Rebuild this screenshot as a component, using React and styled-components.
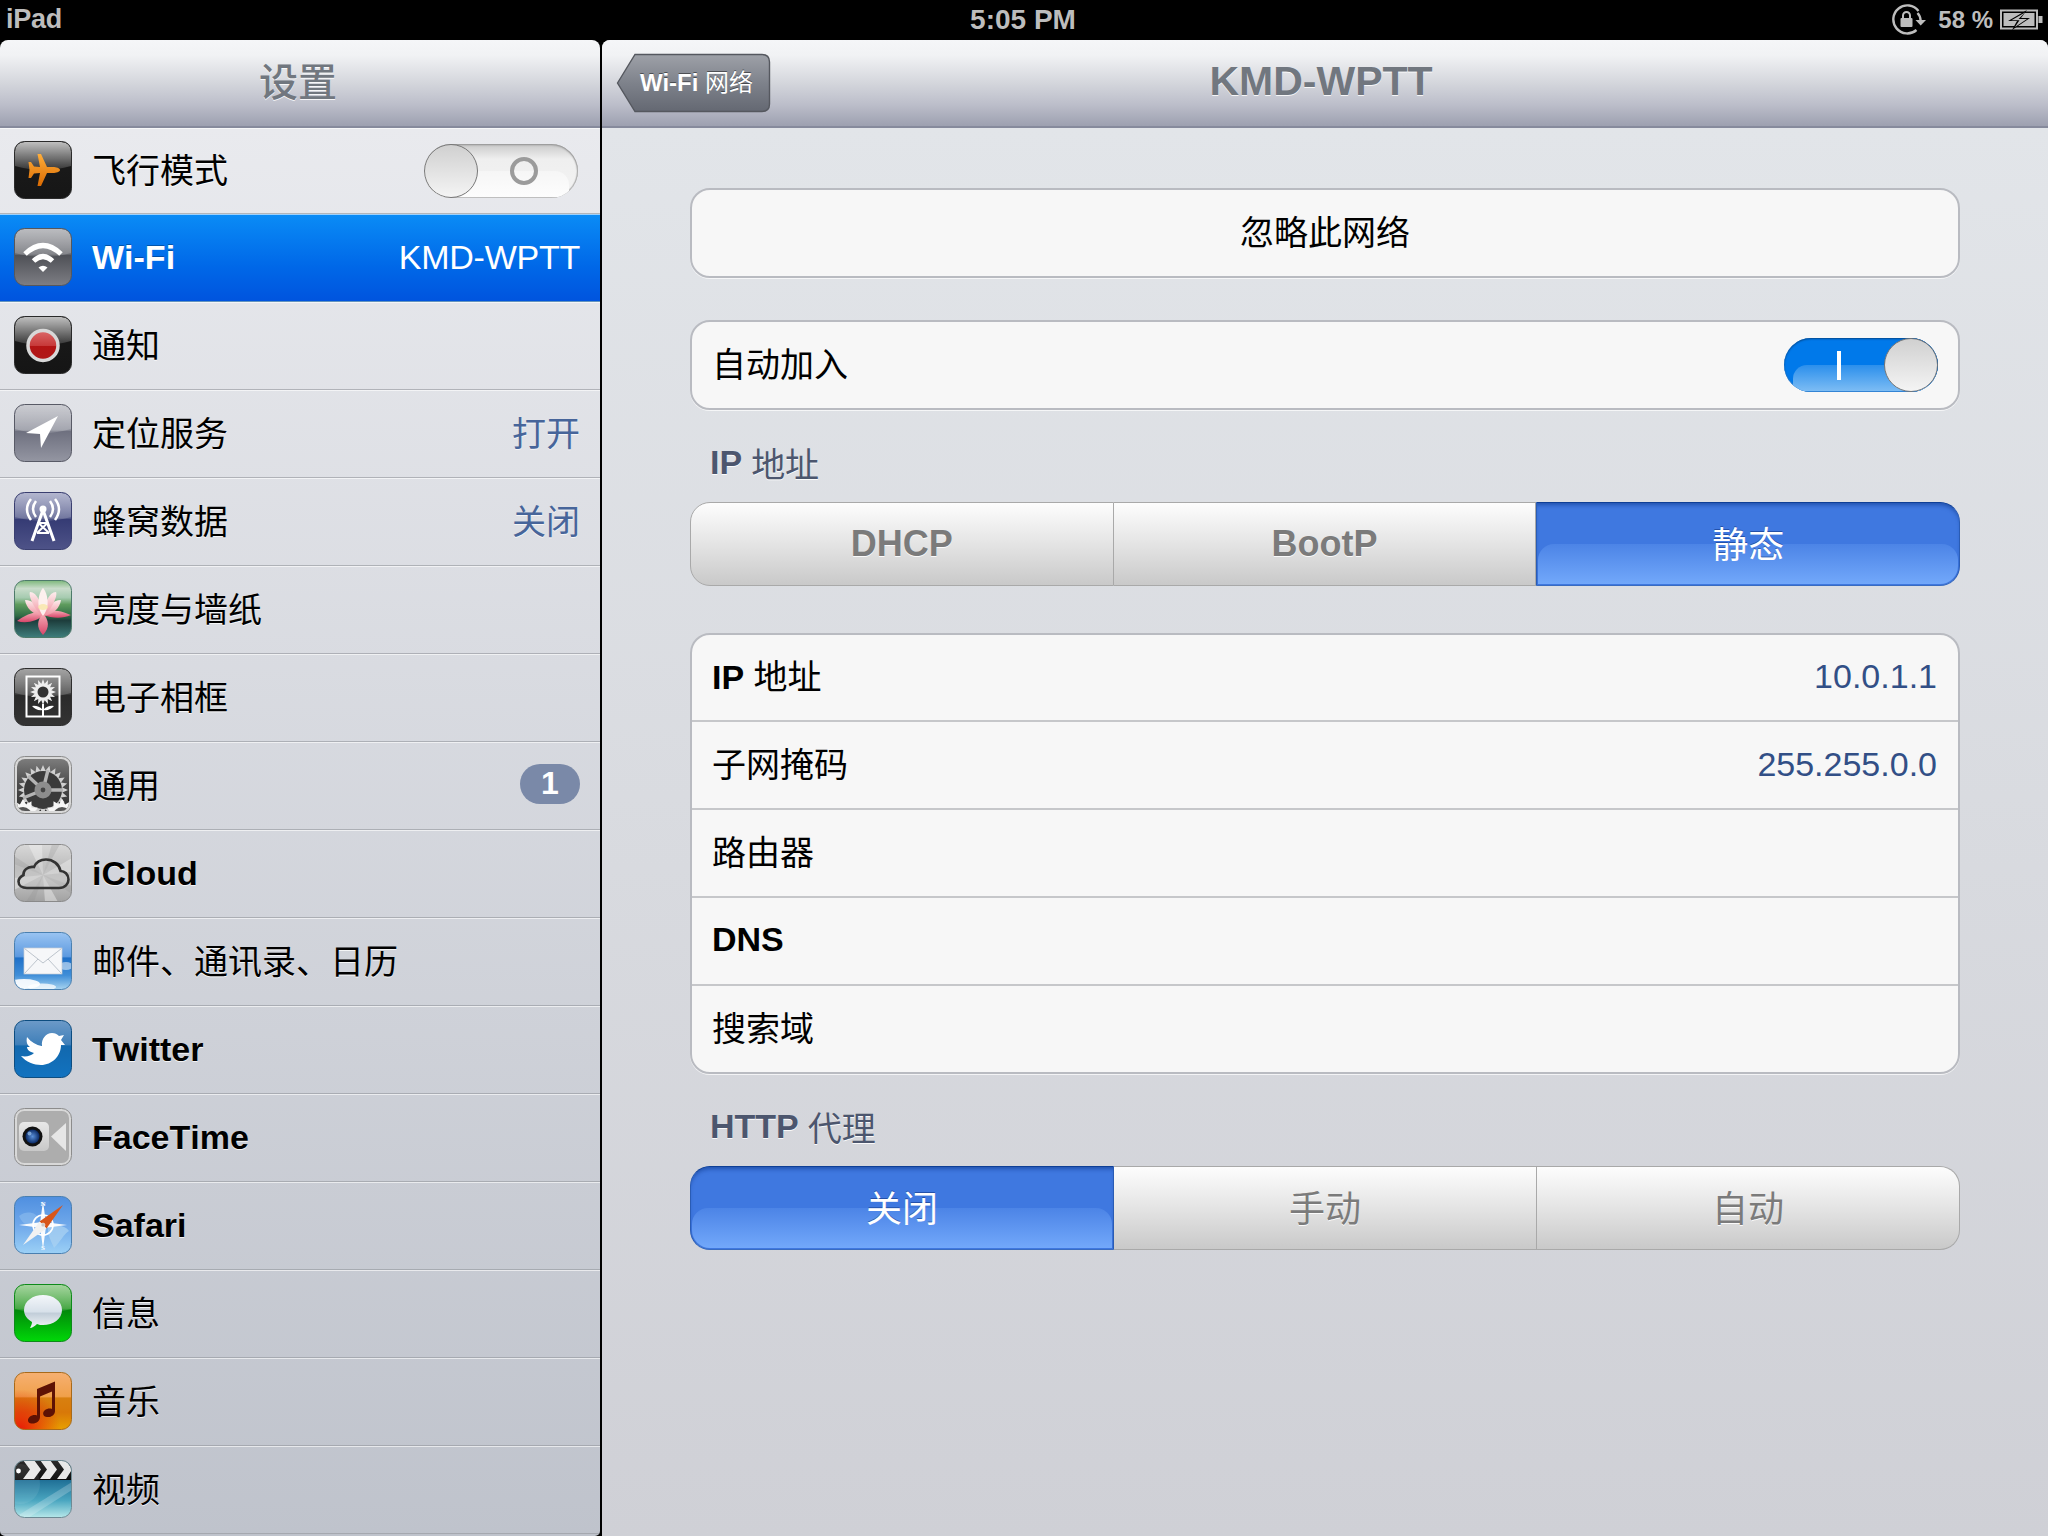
import React from "react";
import styled, { createGlobalStyle } from "styled-components";

const Global = createGlobalStyle`
  html, body { margin: 0; padding: 0; background: #000; }
  * { box-sizing: border-box; }
  body { font-family: "Liberation Sans", "Noto Sans CJK SC", sans-serif; }
`;

const Screen = styled.div`
  width: 2048px; height: 1536px; background: #000; overflow: hidden;
  display: flex; flex-direction: column;
`;
const StatusBar = styled.div`
  height: 40px; flex: none; display: grid; grid-template-columns: 1fr auto 1fr; align-items: center;
  padding: 0 5px 0 6px; color: #bdbdbd; font-size: 27px; font-weight: bold; letter-spacing: -0.3px;
`;
const StatusLeft = styled.div`font-weight: bold; margin-top: -1px;`;
const StatusTime = styled.div`font-size: 28px; letter-spacing: 0; margin: -1px 0 0 -3px;`;
const StatusRight = styled.div`
  display: flex; justify-content: flex-end; align-items: center; gap: 7px; font-weight: normal;
`;
const StatusPct = styled.span`font-size: 24px; font-weight: bold; margin-left: 4px; letter-spacing: 0;`;
const Main = styled.div`flex: 1; display: flex; gap: 2px; min-height: 0;`;
const Sidebar = styled.div`
  width: 600px; flex: none; display: flex; flex-direction: column; overflow: hidden;
  border-radius: 8px 8px 5px 5px;
`;
const NavBar = styled.div`
  height: 88px; flex: none; border-bottom: 2px solid #868a9c;
  background: linear-gradient(#f5f6f8 0%, #f1f2f4 18%, #d4d6dc 50%, #bcbeca 75%, #9da0b0 100%);
`;
const SideBar = styled(NavBar)`
  display: flex; align-items: center; justify-content: center; padding-right: 4px;
`;
const NavTitle = styled.div`
  color: #71777f; text-shadow: 0 1px 0 rgba(255,255,255,.85);
  font-size: ${p => p.$bold ? 41 : 39}px;
  margin-top: ${p => p.$bold ? -4 : -8}px;
  font-weight: ${p => p.$bold ? "bold" : 500};
`;
const RowList = styled.div`
  flex: 1; background: linear-gradient(#e9eaee, #bfc3cc);
`;
const Row = styled.div`
  height: 88px; display: flex; align-items: center; padding: 0 20px 0 14px;
  border-bottom: 1px solid rgba(150,153,160,.65);
  box-shadow: inset 0 1px 0 rgba(255,255,255,.6);
  background: ${p => p.$active ? "linear-gradient(#0a8cf6, #0068e8 60%, #0054de)" : "transparent"};
  &:first-child { height: 86px; }
`;
const IconBox = styled.div`width: 58px; height: 58px; flex: none; margin-bottom: 1px;`;
const RowLabel = styled.div`
  margin-left: 20px; flex: 1; font-size: 34px; font-kerning: none;
  margin-top: ${p => p.$bold ? 0 : -4}px;
  color: ${p => p.$active ? "#fff" : "#000"};
  font-weight: ${p => p.$bold ? "bold" : "normal"};
  text-shadow: ${p => p.$active ? "0 -1px 0 rgba(0,0,0,.3)" : "0 1px 0 rgba(255,255,255,.8)"};
`;
const RowValue = styled.div`
  font-size: 34px;
  margin-top: ${p => p.$active ? 0 : -4}px;
  letter-spacing: ${p => p.$active ? -0.25 : 0}px;
  color: ${p => p.$active ? "#fff" : "#47659a"};
  text-shadow: ${p => p.$active ? "none" : "0 1px 0 rgba(255,255,255,.7)"};
`;
const Badge = styled.div`
  width: 60px; height: 40px; border-radius: 20px; background: #7a89a8; color: #fff;
  font-size: 32px; font-weight: bold; display: flex; align-items: center; justify-content: center;
  margin-top: -4px;
`;
const Track = styled.div`
  position: relative; width: 154px; height: 54px; border-radius: 27px; overflow: hidden; flex: none;
  display: flex; flex-direction: ${p => p.$on ? "row" : "row-reverse"}; align-items: center;
  margin-right: ${p => p.$on ? 0 : 2}px;
  background: ${p => p.$on ? "#0079ea" : "linear-gradient(#c9c9c9, #efefef 28%, #f3f3f3)"};
  box-shadow: inset 0 1px 2px ${p => p.$on ? "#04478c" : "#8f8f8f"}, inset 0 -1px 1px ${p => p.$on ? "#3c8bd8" : "#bdbdbd"}, inset -1px 0 1px ${p => p.$on ? "#0a5ca8" : "#b5b5b5"};
  &::before {
    content: ""; position: absolute; left: 9px; right: 9px; top: 27px; bottom: 1px;
    border-radius: 14px 14px 0 0;
    background: ${p => p.$on ? "linear-gradient(#2b8fec, #7cbcf4)" : "linear-gradient(#f6f6f6, #fdfdfd)"};
  }
`;
const TrackMark = styled.div`
  position: relative; flex: 1; display: flex; align-items: center; justify-content: center;
  padding-left: ${p => p.$on ? 9 : 0}px;
  padding-right: ${p => p.$on ? 0 : 9}px;
`;
const OnBar = styled.div`width: 4px; height: 29px; background: #fff;`;
const OffRing = styled.div`
  width: 28px; height: 28px; border: 4px solid #9b9b9b; border-radius: 50%;
`;
const Knob = styled.div`
  position: relative; width: 54px; height: 54px; flex: none; border-radius: 50%;
  background: linear-gradient(#d0d0d0, #f4f4f4);
  border: 1.5px solid #777;
`;
const Detail = styled.div`
  flex: 1; display: flex; flex-direction: column; overflow: hidden; border-radius: 8px 8px 0 0;
  background: #d8dade;
`;
const DetailNav = styled(NavBar)`
  display: grid; grid-template-columns: 1fr auto 1fr; align-items: center; padding: 0 22px 0 14px;
`;
const BackButton = styled.div`
  position: relative; width: 155px; height: 60px; display: flex; align-items: center;
  padding-left: 24px; color: #fff; font-size: 24px; margin-top: -1px;
  text-shadow: 0 -1px 0 rgba(0,0,0,.45);
`;
const BackShape = styled.svg`position: absolute; left: 0; top: 0;`;
const BackText = styled.span`position: relative; margin-top: -4px;`;
const Latin = styled.b`font-weight: bold;`;
const DetailBody = styled.div`
  flex: 1; padding: 60px 88px 0; background: linear-gradient(#e2e5e9, #cfd0d6);
`;
const Card = styled.div`
  background: #f7f7f7; border: 2px solid #b9bbc1; border-radius: 20px; overflow: hidden;
  box-shadow: 0 1px 0 rgba(255,255,255,.7);
  margin-top: ${p => p.$top || 0}px;
`;
const CardRow = styled.div`
  height: ${p => p.$h || 88}px; display: flex; align-items: center; padding: 0 20px 0 20px; font-size: 34px; color: #000;
  justify-content: ${p => p.$center ? "center" : "space-between"};
  & + & { border-top: 2px solid #c6c7ca; }
`;
const RowText = styled.span`margin-top: ${p => p.$latin ? -3 : -6}px;`;
const TableValue = styled.span`color: #324f86; margin: -2px 1px 0 0;`;
const SectionHead = styled.div`
  height: 46px; margin: 30px 0 16px; padding: 0 0 2px 20px; display: flex; align-items: center;
  font-size: 34px; color: #4c566e; text-shadow: 0 1px 0 rgba(255,255,255,.9); gap: 9px;
`;
const Segments = styled.div`
  display: flex; height: 84px; width: 100%;
`;
const Segment = styled.div`
  position: relative; flex: 1; display: flex; align-items: center; justify-content: center;
  font-size: 36px;
  color: ${p => p.$selected ? "#fff" : "#7b7b7b"};
  font-weight: ${p => p.$bold ? "bold" : "normal"};
  text-shadow: ${p => p.$selected ? "0 -1px 0 rgba(0,30,100,.45)" : "0 1px 0 rgba(255,255,255,.9)"};
  background: ${p => p.$selected ? "#3f78e0" : "linear-gradient(#fdfdfd, #e4e4e4 50%, #c9c9c9)"};
  border-top: 1px solid ${p => p.$selected ? "#0e3f96" : "#a9a9a9"};
  border-bottom: 1px solid ${p => p.$selected ? "#3a6cc0" : "#a9a9a9"};
  border-left: ${p => p.$first ? "1px solid #a9a9a9" : "none"};
  border-right: 1px solid #a9a9a9;
  border-radius: ${p => p.$first ? "20px 0 0 20px" : p.$last ? "0 20px 20px 0" : "0"};
  ${p => p.$selected && `
    border-left: 1px solid #2a5cb4; border-right: 1px solid #2a5cb4;
    box-shadow: inset 0 4px 4px -2px rgba(10,50,130,.55);
    &::before {
      content: ""; position: absolute; left: 1px; right: 1px; top: 41px; bottom: 1px;
      border-radius: ${p.$first ? "16px 16px 0 18px" : "16px 16px 18px 0"};
      background: linear-gradient(#4c84e6, #72a8fa);
    }
  `}
  & > span { position: relative; margin-top: ${p => p.$bold ? 0 : -5}px; }
`;

/* ---------- icons ---------- */
const GEAR = (cx, cy, R, r, n) => {
  const pts = [];
  for (let i = 0; i < n * 2; i++) {
    const a = (Math.PI * i) / n;
    const q = i % 2 ? r : R;
    pts.push(`${(cx + q * Math.sin(a)).toFixed(2)},${(cy - q * Math.cos(a)).toFixed(2)}`);
  }
  return pts.join(" ");
};
const RECT = { x: 0.5, y: 0.5, width: 57, height: 57, rx: 10 };
const Grad = ({ id, stops, x2 = 0, y2 = 1, x1 = 0, y1 = 0 }) => (
  <linearGradient id={id} x1={x1} y1={y1} x2={x2} y2={y2}>
    {stops.map(([o, c, a], i) => <stop key={i} offset={o} stopColor={c} stopOpacity={a === undefined ? 1 : a} />)}
  </linearGradient>
);
const GlossPath = ({ id, o = 0.55, lo = 0.12 }) => (
  <>
    <defs><Grad id={id} stops={[[0, "#fff", o], [1, "#fff", lo]]} /></defs>
    <path d="M1 11 Q1 1 11 1 H47 Q57 1 57 11 V25 Q29 33 1 25Z" fill={`url(#${id})`} />
  </>
);
const Base = ({ id, stops, stroke = "#333", children }) => {
  const clip = `${id}c`;
  return (
    <svg width="58" height="58" viewBox="0 0 58 58">
      <defs>
        <Grad id={id} stops={stops} />
        <clipPath id={clip}><rect {...RECT} /></clipPath>
      </defs>
      <rect {...RECT} fill={`url(#${id})`} />
      <g clipPath={`url(#${clip})`}>{children}</g>
      <rect {...RECT} fill="none" stroke={stroke} strokeWidth="1" />
    </svg>
  );
};

const Airplane = () => (
  <Base id="ia" stops={[[0, "#1c1c1c"], [1, "#161616"]]} stroke="#2b2b2b">
    <defs><Grad id="iap" stops={[[0, "#ffae3a"], [1, "#d96a02"]]} /></defs>
    <GlossPath id="iag" o={0.72} lo={0.12} />
    <path fill="url(#iap)" d="M46 29 C46 31 42 32 39 32 H33 L27 45 H23.5 L26 32 L20 32.5 L17 37 H14.5 L15.5 29 L14.5 21 H17 L20 25.5 L26 26 L23.5 13 H27 L33 26 H39 C42 26 46 27 46 29Z" />
  </Base>
);
const Wifi = () => (
  <Base id="iw" stops={[[0, "#8a8c92"], [0.45, "#6c6e74"], [0.47, "#4f5157"], [1, "#7d7e84"]]} stroke="#55575c">
    <GlossPath id="iwg" o={0.42} lo={0.14} />
    <path d="M11 26 Q29 9 47 26" fill="none" stroke="#fff" strokeWidth="5" />
    <path d="M19.5 33 Q29 24 38.5 33" fill="none" stroke="#fff" strokeWidth="5" />
    <path d="M24.5 39.5 Q29 36 33.5 39.5 L29 44Z" fill="#fff" />
  </Base>
);
const Notify = () => (
  <Base id="in" stops={[[0, "#1b1b1b"], [1, "#151515"]]} stroke="#2a2a2a">
    <defs><Grad id="inr" stops={[[0, "#dc6a6a"], [0.5, "#c73a3a"], [0.52, "#b31414"], [1, "#b01818"]]} /></defs>
    <GlossPath id="ing" o={0.72} lo={0.12} />
    <circle cx="29" cy="29.5" r="15" fill="url(#inr)" stroke="#d8d8d8" strokeWidth="3.5" />
  </Base>
);
const Location = () => (
  <Base id="il" stops={[[0, "#a0a2ac"], [0.45, "#8c8e9a"], [0.47, "#6e707f"], [1, "#9496a2"]]} stroke="#585a66">
    <GlossPath id="ilg" o={0.45} lo={0.18} />
    <path d="M44 12 L12 29 L26 30 L27 44Z" fill="#fff" />
  </Base>
);
const Cellular = () => (
  <Base id="ic" stops={[[0, "#7c82ac"], [0.45, "#5a608f"], [0.47, "#353b74"], [1, "#4e5388"]]} stroke="#3a3f70">
    <GlossPath id="icg" o={0.42} lo={0.12} />
    <g fill="none" stroke="#fff" strokeWidth="2.5">
      <path d="M29 18 L18 49 M29 18 L40 49" strokeWidth="3" />
      <path d="M24.5 31 L35 41 M33.5 31 L23 41 M23 41 H35 M25 31 H33" strokeWidth="2" />
      <path d="M22 9 Q16 17 22 25 M36 9 Q42 17 36 25" />
      <path d="M17 7 Q9 17 17 28 M41 7 Q49 17 41 28" />
    </g>
    <circle cx="29" cy="17" r="3.5" fill="#fff" />
  </Base>
);
const Lotus = () => (
  <Base id="ib" stops={[[0, "#7eb87c"], [0.14, "#c9dccb"], [0.3, "#a6cbb0"], [0.42, "#5f9c5e"], [0.62, "#2f6b45"], [0.7, "#1d3d3c"], [1, "#3e7e7c"]]} stroke="#4d7a6a">
    <defs>
      <Grad id="ibp" stops={[[0, "#fdeeee"], [1, "#f0909f"]]} />
      <Grad id="ibq" stops={[[0, "#f6b0b8"], [1, "#d8456a"]]} />
    </defs>
    <path d="M29 31 C45 29 52 33 57 35 C48 39 38 38 29 35Z" fill="url(#ibq)" />
    <path d="M29 32 C20 31 10 36 3 41 C12 44 24 41 29 35Z" fill="url(#ibq)" />
    <path d="M29 33 C35 40 36 48 29 55 C22 48 23 40 29 33Z" fill="url(#ibq)" />
    <path d="M29 36 C18 35 12 27 11 20 C19 20 27 27 29 36Z" fill="url(#ibp)" />
    <path d="M29 36 C40 35 46 27 47 20 C39 20 31 27 29 36Z" fill="url(#ibp)" />
    <path d="M29 36 C20 30 14 15 16 12 C23 12 28 24 29 36Z" fill="url(#ibp)" />
    <path d="M29 36 C38 30 44 15 42 12 C35 12 30 24 29 36Z" fill="url(#ibp)" />
    <path d="M29 36 C21 26 25 12 29 8 C33 12 37 26 29 36Z" fill="#fdf0ee" />
    <ellipse cx="29" cy="27" rx="5" ry="3" fill="#f7e6a8" opacity=".8" />
  </Base>
);
const PhotoFrame = () => (
  <Base id="ip" stops={[[0, "#5a5a5a"], [0.45, "#3c3c3c"], [0.47, "#2a2a2a"], [1, "#333"]]} stroke="#2e2e2e">
    <GlossPath id="ipg" o={0.45} lo={0.15} />
    <rect x="12.5" y="8.5" width="33" height="40" fill="none" stroke="#fff" strokeWidth="2" />
    <polygon points={GEAR(29, 24, 13, 8.5, 16)} fill="#eee" />
    <circle cx="29" cy="24" r="5.5" fill="#333" />
    <path d="M29 36 V48" stroke="#fff" strokeWidth="2" />
    <path d="M29 42 Q24 37 18 38 Q22 43 29 42Z M29 42 Q34 37 40 38 Q36 43 29 42Z" fill="#fff" />
  </Base>
);
const General = () => (
  <svg width="58" height="58" viewBox="0 0 58 58">
    <defs>
      <Grad id="ig" stops={[[0, "#7c7c7c"], [0.5, "#4a4a4a"], [1, "#2e2e2e"]]} />
      <clipPath id="igc"><rect x="3" y="3" width="52" height="52" rx="8" /></clipPath>
    </defs>
    <rect {...RECT} fill="#d8d8d8" stroke="#8a8a8a" />
    <rect x="3" y="3" width="52" height="52" rx="8" fill="url(#ig)" />
    <g clipPath="url(#igc)">
      <polygon points={GEAR(29, 34, 25, 19.5, 24)} fill="#d0d0d0" />
      <circle cx="29" cy="34" r="19" fill="#3a3a3a" />
      <path d="M29 34 L34 14 M29 34 L49 34 M29 34 L9 42 M29 34 L14 20" stroke="#b4b4b4" strokeWidth="3.4" />
      <circle cx="29" cy="34" r="8.5" fill="#8d8d8d" />
      <circle cx="29" cy="34" r="2.4" fill="#444" />
      <polygon points={GEAR(9, 60, 17, 12, 12)} fill="#f6f6f6" />
      <polygon points={GEAR(48, 60, 17, 12, 12)} fill="#f6f6f6" />
      <circle cx="9" cy="60" r="9" fill="#555" />
      <circle cx="48" cy="60" r="9" fill="#555" />
    </g>
  </svg>
);
const ICloud = () => (
  <Base id="ii" stops={[[0, "#d8d8d8"], [0.4, "#bdbdbd"], [0.6, "#c4c4c4"], [1, "#a2a2a2"]]} stroke="#8a8a8a">
    <path d="M29 31 L14 0 H28Z M29 31 L44 58 H31Z M29 31 L58 14 V28Z M29 31 L0 46 V34Z" fill="#f2f2f2" opacity=".45" />
    <path d="M29 31 L38 0 H46Z M29 31 L20 58 H12Z M29 31 L58 42 V50Z M29 31 L0 20 V12Z" fill="#8f8f8f" opacity=".25" />
    <path d="M13 44 H45 C51 44 54.5 40 54.5 35.5 C54.5 30 50.5 27 46.5 27 C45 20 39 15.5 32 15.5 C26.5 15.5 22 18.5 20 23 C13 22 9 27 9.5 31 C6 33 4.5 35 4.5 37.5 C4.5 41.5 8 44 13 44Z" fill="#c8c8c8" fillOpacity=".35" stroke="#333" strokeWidth="2.6" />
  </Base>
);
const Mail = () => (
  <Base id="im" stops={[[0, "#9ac4f2"], [0.42, "#5d9ae0"], [0.45, "#1f70c8"], [0.75, "#3f8ed8"], [1, "#a8d4f0"]]} stroke="#4a80b0">
    <ellipse cx="10" cy="52" rx="16" ry="5" fill="#fff" opacity=".9" />
    <ellipse cx="28" cy="55" rx="14" ry="3.5" fill="#fff" opacity=".75" />
    <ellipse cx="52" cy="34" rx="7" ry="4" fill="#fff" opacity=".5" />
    <rect x="10" y="16" width="38" height="26" fill="#f6f7f9" stroke="#c6ccd4" strokeWidth=".7" />
    <path d="M10.5 16.5 L29 31 L47.5 16.5 M10.5 41.5 L24 27 M47.5 41.5 L34 27" fill="none" stroke="#b6bdc6" strokeWidth=".9" />
  </Base>
);
const Twitter = () => (
  <Base id="it" stops={[[0, "#6c9ac8"], [0.42, "#3f7fb9"], [0.45, "#1268ae"], [1, "#1273c0"]]} stroke="#0d4d80">
    <path fill="#fff" d="M13 17 C17 22 22 25 28 26 C27 19 32 13 38 13 C41 13 43 14 45 16 L50 15 L47 20 L51 25 L47 25 C47 36 38 45 27 45 C20 45 12 42 7 36 C12 37 17 36 20 33 C16 32 13 30 13 27 L16 27 C13 25 12 22 13 17Z" />
  </Base>
);
const FaceTime = () => (
  <svg width="58" height="58" viewBox="0 0 58 58">
    <defs>
      <radialGradient id="ifl"><stop offset="0" stopColor="#5a90d8" /><stop offset="1" stopColor="#0a2a66" /></radialGradient>
      <Grad id="ifb" stops={[[0, "#e8e8e8"], [1, "#c8c8c8"]]} />
    </defs>
    <rect {...RECT} fill="#d8d8d8" stroke="#8c8c8c" />
    <rect x="3" y="3" width="52" height="52" rx="7" fill="#adadad" />
    <rect x="5" y="14" width="30" height="29" rx="5" fill="url(#ifb)" />
    <circle cx="18.5" cy="28.5" r="10" fill="#111" />
    <circle cx="18.5" cy="28.5" r="7" fill="url(#ifl)" />
    <circle cx="15.5" cy="25.5" r="2" fill="#9cc4f0" opacity=".7" />
    <path d="M37 28.5 L52 15 V43Z" fill="#e6e6e6" />
  </svg>
);
const Safari = () => (
  <Base id="is" stops={[[0, "#4f8fe0"], [0.5, "#6fa8ea"], [1, "#9bd0f6"]]} stroke="#4a7fb0">
    <path d="M34 30 C42 28 52 30 55 35 C50 38 46 46 40 52 C38 46 33 40 34 30Z" fill="#a9d2f2" opacity=".75" />
    <path d="M5 20 C12 14 22 16 24 22 C18 30 10 32 5 20Z" fill="#8cbcee" opacity=".6" />
    <polygon points={GEAR(29, 29, 24, 4, 4)} fill="#fff" opacity=".95" />
    <circle cx="29" cy="29" r="10" fill="none" stroke="#fff" strokeWidth="1.6" />
    <path d="M49 9 L32.5 32.5 L25.5 25.5Z" fill="#d8561a" />
    <path d="M9 49 L32.5 32.5 L25.5 25.5Z" fill="#f2f2f2" />
    <circle cx="29" cy="29" r="2" fill="#c8c8c8" stroke="#fff" strokeWidth=".5" />
    <text x="29" y="10" fontSize="7" fontWeight="bold" fill="#fff" textAnchor="middle" fontFamily="'Liberation Serif', serif">N</text>
    <text x="29" y="54" fontSize="7" fontWeight="bold" fill="#fff" textAnchor="middle" fontFamily="'Liberation Serif', serif">S</text>
  </Base>
);
const Messages = () => (
  <Base id="ime" stops={[[0, "#6dba62"], [0.42, "#2a9a28"], [0.45, "#02880a"], [1, "#00d808"]]} stroke="#0e8a1a">
    <GlossPath id="imeg" o={0.38} lo={0.1} />
    <defs><Grad id="imeb" stops={[[0, "#f4f7fa"], [0.5, "#d8e1ea"], [0.56, "#c2ced9"], [1, "#f2f5f7"]]} /></defs>
    <path fill="url(#imeb)" d="M29 11 C39 11 48 17 48 26 C48 35 39 41 29 41 C27 41 25 41 23 40 C21 42 18 44 16 44 C17 42 18 40 18 38 C13 35 10 31 10 26 C10 17 19 11 29 11Z" />
  </Base>
);
const Music = () => (
  <Base id="imu" stops={[[0, "#f6b072"], [0.42, "#f0a04a"], [0.45, "#d88010"], [0.7, "#d87808"], [1, "#e8a000"]]} stroke="#a86a1a">
    <defs><radialGradient id="imur" cx="0.1" cy="1" r="0.7"><stop offset="0" stopColor="#e81808" /><stop offset="1" stopColor="#e81808" stopOpacity="0" /></radialGradient></defs>
    <rect width="58" height="58" fill="url(#imur)" />
    <path fill="#5e1204" d="M23 17 L41 9.5 V39 C41 43 37 45.5 33 45 C29 44.5 28 41 30.5 38.5 C33 36.5 36 36 38 37 V19.5 L26 24.5 V45 C26 49 22 52 17.5 51.5 C13.5 51 13 47.5 15.5 45 C18 43 21 42.5 23 43.5Z" />
  </Base>
);
const Video = () => (
  <Base id="iv" stops={[[0, "#2a2a2a"], [0.33, "#111"], [0.34, "#1f6f96"], [0.7, "#4aa6c0"], [1, "#b6e8ea"]]} stroke="#6d8a94">
    <path d="M9 0 H20 L27 9.5 L20 19 H9 L16 9.5Z M26 0 H36 L43 9.5 L36 19 H26 L33 9.5Z M43 0 H52 L58 9.5 L52 19 H43 L50 9.5Z" fill="#e8e8e8" />
    <path d="M0 0 H8 L0 8Z" fill="#4a4a4a" />
    <rect x="0" y="19" width="58" height="1" fill="#0c0c0c" />
    <circle cx="4.5" cy="11" r="2.4" fill="#fff" />
    <path d="M0 58 L58 22 V30 L14 58Z" fill="#fff" opacity=".22" />
    <circle cx="6" cy="24" r="20" fill="#fff" opacity=".08" />
  </Base>
);

const RotationLock = () => (
  <svg width="36" height="32" viewBox="0 0 36 32">
    <path d="M25.5 26 A14 14 0 1 1 27.5 7" fill="none" stroke="#bdbdbd" strokeWidth="2.4" />
    <rect x="9.5" y="14" width="12" height="9" rx="1" fill="#bdbdbd" />
    <path d="M12 14 V11.5 A3.5 3.5 0 0 1 19 11.5 V14" fill="none" stroke="#bdbdbd" strokeWidth="2" />
    <path d="M24.5 16 H35 L29.7 21.5Z" fill="#bdbdbd" />
    <path d="M26.5 9 Q29.5 12 29.7 17" fill="none" stroke="#bdbdbd" strokeWidth="2.4" />
  </svg>
);
const Battery = () => (
  <svg width="43" height="22" viewBox="0 0 43 22">
    <rect x="1" y="1.5" width="36" height="18" fill="none" stroke="#bdbdbd" strokeWidth="2" />
    <rect x="3.5" y="4" width="31" height="13" fill="#bdbdbd" />
    <rect x="38.5" y="7" width="4" height="7" fill="#bdbdbd" />
    <path d="M27 1 L8 12 H17 L12 21 L30 9 H21Z" fill="#000" />
    <path d="M25 3.5 L11.5 11.3 H19.5 L15 18 L27 10 H18.5Z" fill="#bdbdbd" />
  </svg>
);
const BackArrow = () => (
  <BackShape width="155" height="60" viewBox="0 0 155 60">
    <defs><Grad id="bk" stops={[[0, "#9ea1a8"], [0.5, "#7e828b"], [1, "#646872"]]} /></defs>
    <path d="M1.5 30 L19 1.5 H146 Q153.5 1.5 153.5 9 V51 Q153.5 58.5 146 58.5 H19Z" fill="url(#bk)" stroke="#55585f" strokeWidth="1.4" />
  </BackShape>
);

const Switch = ({ on }) => (
  <Track $on={on}>
    <TrackMark $on={on}>{on ? <OnBar /> : <OffRing />}</TrackMark>
    <Knob />
  </Track>
);

const MENU = [
  { icon: Airplane, label: "飞行模式", toggle: true },
  { icon: Wifi, label: "Wi-Fi", bold: true, value: "KMD-WPTT", active: true },
  { icon: Notify, label: "通知" },
  { icon: Location, label: "定位服务", value: "打开" },
  { icon: Cellular, label: "蜂窝数据", value: "关闭" },
  { icon: Lotus, label: "亮度与墙纸" },
  { icon: PhotoFrame, label: "电子相框" },
  { icon: General, label: "通用", badge: "1" },
  { icon: ICloud, label: "iCloud", bold: true },
  { icon: Mail, label: "邮件、通讯录、日历" },
  { icon: Twitter, label: "Twitter", bold: true },
  { icon: FaceTime, label: "FaceTime", bold: true },
  { icon: Safari, label: "Safari", bold: true },
  { icon: Messages, label: "信息" },
  { icon: Music, label: "音乐" },
  { icon: Video, label: "视频" },
];

export default function App() {
  return (
    <Screen>
      <Global />
      <StatusBar>
        <StatusLeft>iPad</StatusLeft>
        <StatusTime>5:05 PM</StatusTime>
        <StatusRight>
          <RotationLock />
          <StatusPct>58 %</StatusPct>
          <Battery />
        </StatusRight>
      </StatusBar>
      <Main>
        <Sidebar>
          <SideBar><NavTitle>设置</NavTitle></SideBar>
          <RowList>
            {MENU.map(({ icon: Icon, label, bold, value, active, toggle, badge }) => (
              <Row key={label} $active={active}>
                <IconBox><Icon /></IconBox>
                <RowLabel $bold={bold} $active={active}>{label}</RowLabel>
                {value && <RowValue $active={active}>{value}</RowValue>}
                {toggle && <Switch on={false} />}
                {badge && <Badge>{badge}</Badge>}
              </Row>
            ))}
          </RowList>
        </Sidebar>
        <Detail>
          <DetailNav>
            <BackButton>
              <BackArrow />
              <BackText><Latin>Wi-Fi</Latin> 网络</BackText>
            </BackButton>
            <NavTitle $bold>KMD-WPTT</NavTitle>
            <div />
          </DetailNav>
          <DetailBody>
            <Card><CardRow $center $h={86}><RowText>忽略此网络</RowText></CardRow></Card>
            <Card $top={42}>
              <CardRow $h={86}>
                <RowText>自动加入</RowText>
                <Switch on />
              </CardRow>
            </Card>
            <SectionHead><Latin>IP</Latin><span>地址</span></SectionHead>
            <Segments>
              <Segment $first $bold><span>DHCP</span></Segment>
              <Segment $bold><span>BootP</span></Segment>
              <Segment $selected $last><span>静态</span></Segment>
            </Segments>
            <Card $top={47}>
              <CardRow $h={85}><RowText><Latin>IP</Latin> 地址</RowText><TableValue>10.0.1.1</TableValue></CardRow>
              <CardRow><RowText>子网掩码</RowText><TableValue>255.255.0.0</TableValue></CardRow>
              <CardRow><RowText>路由器</RowText></CardRow>
              <CardRow><RowText $latin><Latin>DNS</Latin></RowText></CardRow>
              <CardRow><RowText>搜索域</RowText></CardRow>
            </Card>
            <SectionHead><Latin>HTTP</Latin><span>代理</span></SectionHead>
            <Segments>
              <Segment $selected $first><span>关闭</span></Segment>
              <Segment><span>手动</span></Segment>
              <Segment $last><span>自动</span></Segment>
            </Segments>
          </DetailBody>
        </Detail>
      </Main>
    </Screen>
  );
}
